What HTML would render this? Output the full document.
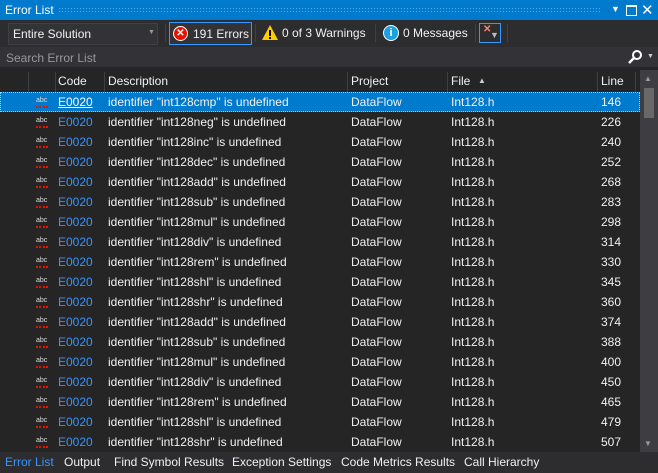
<!DOCTYPE html><html><head><style>
body{margin:0;width:658px;height:473px;background:#252526;font-family:"Liberation Sans",sans-serif;font-size:12px;color:#f1f1f1;position:relative;overflow:hidden}
.a{position:absolute;white-space:nowrap}
.title{left:0;top:0;width:658px;height:20px;background:#007acc}
.tb{left:0;top:20px;width:658px;height:27px;background:#2d2d30}
.srch{left:0;top:47px;width:658px;height:20px;background:#333337;color:#999}
.hdr{left:0;top:70px;width:640px;height:22px;background:#252526}
.sep{position:absolute;top:72px;width:1px;height:20px;background:#3f3f46}
.row{position:absolute;left:0;width:640px;height:20px;line-height:20px}
.row span{position:absolute}
.c{left:58px;color:#3794ff}
.row span.ic{left:36px;top:5px;font-size:7px;line-height:7px;color:#ddd}
.ic:after{content:"";position:absolute;left:0;top:7px;width:12px;height:2px;border-bottom:2px dotted #e51400}
</style></head><body>
<div class="a title"><span class="a" style="left:5px;top:3px;color:#fff">Error List</span>
<div class="a" style="left:58px;top:7px;width:543px;height:6px;background-image:radial-gradient(#5aa9e0 0.7px,transparent 0.8px);background-size:3px 3px"></div>
<span class="a" style="left:611px;top:4px;color:#fff;font-size:9px">▼</span>
<div class="a" style="left:626px;top:5px;width:9px;height:8px;border:1px solid #fff;border-top-width:2px"></div>
<span class="a" style="left:641px;top:1px;color:#fff;font-size:15px">✕</span></div>
<div class="a tb">
<div class="a" style="left:8px;top:3px;width:148px;height:20px;background:#333337;border:1px solid #3f3f46"><span class="a" style="left:4px;top:3px">Entire Solution</span><span class="a" style="left:139px;top:5px;font-size:7px;color:#999">▼</span></div>
<div class="a" style="left:165px;top:4px;width:1px;height:18px;background:#3f3f46"></div>
<div class="a" style="left:169px;top:2px;width:81px;height:21px;border:1px solid #3399ff;background:#333337"><div class="a" style="left:3px;top:3px;width:15px;height:15px;border-radius:50%;background:#e51400;border:1px solid #fff;box-sizing:border-box;color:#fff;font-size:10px;text-align:center;line-height:13px;font-weight:bold">✕</div><span class="a" style="left:23px;top:4px">191 Errors</span></div>
<div class="a" style="left:255px;top:4px;width:1px;height:18px;background:#3f3f46"></div>
<svg class="a" style="left:261px;top:4px" width="18" height="17"><path d="M9 1 L17 16 L1 16 Z" fill="#ffcc00"/><rect x="8" y="6" width="2" height="6" fill="#000"/><rect x="8" y="13" width="2" height="2" fill="#000"/></svg><span class="a" style="left:282px;top:6px">0 of 3 Warnings</span>
<div class="a" style="left:375px;top:4px;width:1px;height:18px;background:#3f3f46"></div>
<div class="a" style="left:383px;top:5px;width:16px;height:16px;border-radius:50%;background:#1ba1e2;border:1px solid #fff;box-sizing:border-box;color:#fff;font-size:11px;text-align:center;line-height:14px;font-weight:bold">i</div><span class="a" style="left:403px;top:6px">0 Messages</span>
<div class="a" style="left:475px;top:4px;width:1px;height:18px;background:#3f3f46"></div>
<div class="a" style="left:479px;top:3px;width:22px;height:20px;border:1px solid #3399ff;box-sizing:border-box"><span class="a" style="left:3px;top:0;color:#f48771;font-size:10px;font-weight:bold">✕</span><span class="a" style="left:10px;top:6px;color:#bbb;font-size:9px">▼</span></div>
<div class="a" style="left:507px;top:4px;width:1px;height:18px;background:#3f3f46"></div>
</div>
<div class="a srch"><span class="a" style="left:6px;top:4px">Search Error List</span>
<svg class="a" style="left:628px;top:3px" width="14" height="14"><circle cx="9" cy="5" r="4" fill="none" stroke="#fff" stroke-width="2"/><path d="M6 8 L1 13" stroke="#fff" stroke-width="2.5"/></svg>
<span class="a" style="left:647px;top:6px;font-size:7px;color:#ccc">▼</span></div>
<div class="a hdr"><span class="a" style="left:58px;top:4px">Code</span><span class="a" style="left:108px;top:4px">Description</span><span class="a" style="left:351px;top:4px">Project</span><span class="a" style="left:451px;top:4px">File</span><span class="a" style="left:478px;top:6px;font-size:8px;color:#ccc">▲</span><span class="a" style="left:601px;top:4px">Line</span></div>
<div class="sep" style="left:28px"></div><div class="sep" style="left:55px"></div><div class="sep" style="left:104px"></div><div class="sep" style="left:347px"></div><div class="sep" style="left:447px"></div><div class="sep" style="left:597px"></div><div class="sep" style="left:635px"></div>
<div class="a" style="left:640px;top:70px;width:18px;height:382px;background:#3e3e42"></div>
<div class="a" style="left:644px;top:88px;width:10px;height:30px;background:#686868"></div>
<span class="a" style="left:644px;top:74px;font-size:8px;color:#999">▲</span><span class="a" style="left:644px;top:439px;font-size:8px;color:#999">▼</span>
<div id="rows"></div>
<div class="a" style="left:0;top:452px;width:658px;height:21px;background:#2d2d30"></div>
<span class="a" style="left:5px;top:455px;color:#3794ff">Error List</span>
<span class="a" style="left:64px;top:455px">Output</span>
<span class="a" style="left:114px;top:455px">Find Symbol Results</span>
<span class="a" style="left:232px;top:455px">Exception Settings</span>
<span class="a" style="left:341px;top:455px">Code Metrics Results</span>
<span class="a" style="left:464px;top:455px">Call Hierarchy</span>
<script>
var d=[["cmp",146],["neg",226],["inc",240],["dec",252],["add",268],["sub",283],["mul",298],["div",314],["rem",330],["shl",345],["shr",360],["add",374],["sub",388],["mul",400],["div",450],["rem",465],["shl",479],["shr",507]];
var h="";d.forEach(function(r,i){var sel=i==0;h+='<div class="row" style="top:'+(92+i*20)+'px;'+(sel?'background:#007acc;outline:1px dotted #9cf;outline-offset:-1px':'')+'"><span class="ic">abc</span><span class="c" style="'+(sel?'color:#fff;text-decoration:underline':'')+'">E0020</span><span style="left:108px">identifier "int128'+r[0]+'" is undefined</span><span style="left:351px">DataFlow</span><span style="left:451px">Int128.h</span><span style="left:601px">'+r[1]+'</span></div>'});
document.getElementById("rows").innerHTML=h;
</script>
</body></html>
